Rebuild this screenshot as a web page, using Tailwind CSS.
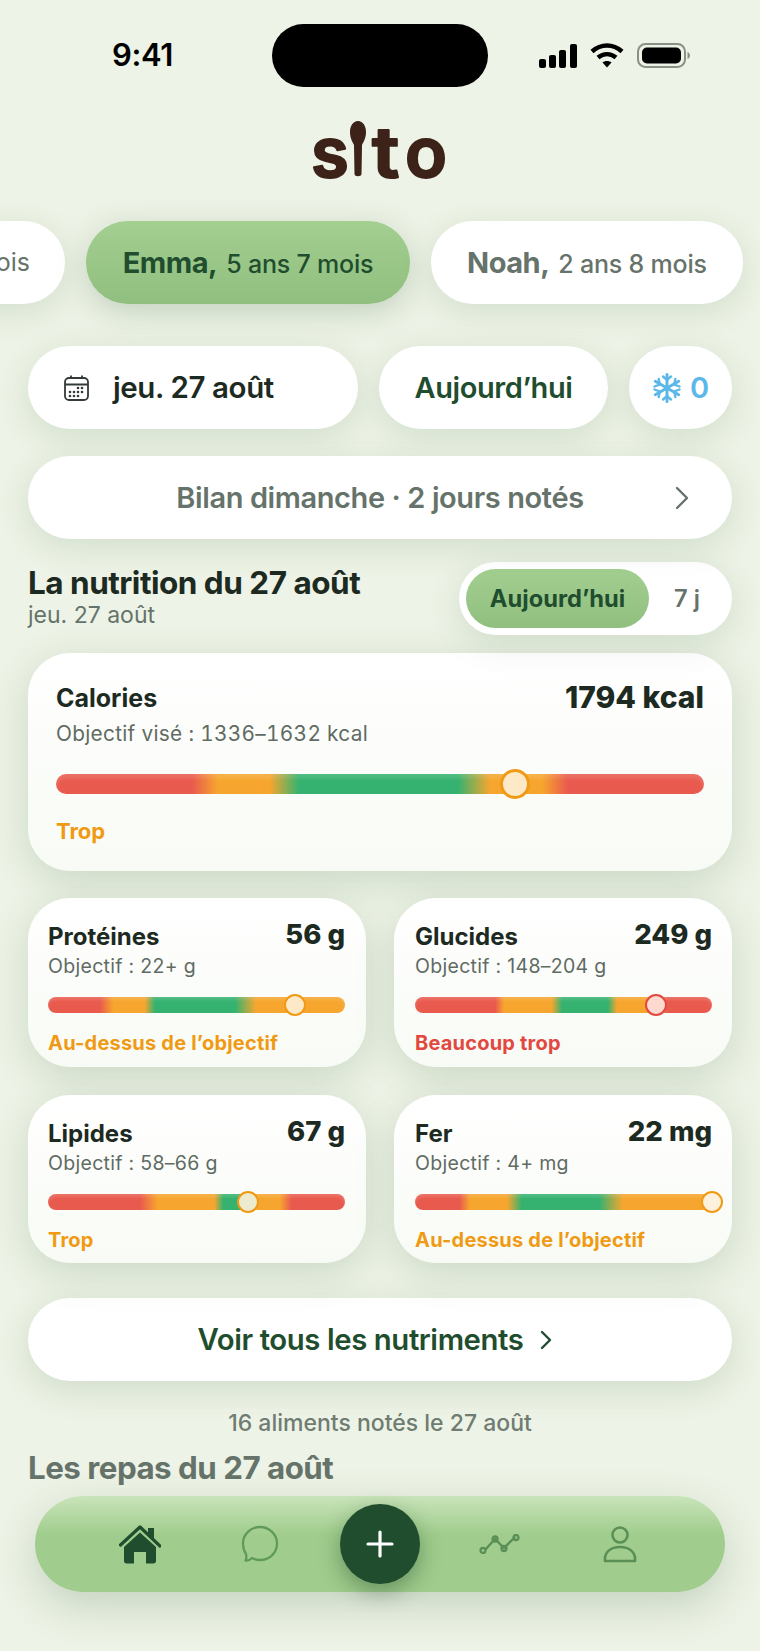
<!DOCTYPE html>
<html lang="fr">
<head>
    <meta charset="UTF-8">
    <meta name="viewport" content="width=device-width, initial-scale=1.0">
    <title>Sito</title>
    <script src="https://cdn.jsdelivr.net/npm/@tailwindcss/browser@4"></script>
</head>
<body>
    <div class="relative w-[760px] h-[1651px] overflow-hidden bg-[#edf3e6] font-[Inter,sans-serif] text-[#1d2a22]">
        <!-- Status bar -->
        <div class="flex items-center justify-between h-[63px] mt-[24px] pl-[112px] pr-[70px]">
            <span class="w-[120px] text-[31px] font-semibold text-black tracking-[-0.4px]">9:41</span>
            <div class="w-[216px] h-[63px] -ml-[11px] rounded-full bg-black"></div>
            <div class="flex items-center gap-[13px]">
                <svg width="38" height="24" viewBox="0 0 38 24" fill="#000"><rect x="0" y="15" width="7" height="9" rx="2"/><rect x="10" y="11" width="7" height="13" rx="2"/><rect x="20" y="6" width="7" height="18" rx="2"/><rect x="31" y="0" width="7" height="24" rx="2"/></svg>
                <svg width="34" height="25" viewBox="0 0 34 25" fill="none" stroke="#000" stroke-width="4.5"><path d="M2 8.5C11 0.5 23 0.5 32 8.5"/><path d="M8 14.5C13.500 10 20.500 10 26 14.500"/><path d="M12.500 19.500L17 24.500L21.500 19.500C19 17.500 15 17.500 12.500 19.500Z" fill="#000" stroke="none"/></svg>
                <svg width="53" height="25" viewBox="0 0 53 25" fill="none"><rect x="1" y="1" width="47" height="23" rx="7.500" stroke="#8b8f86" stroke-width="2"/><rect x="5" y="4.500" width="39" height="16" rx="5" fill="#000"/><path d="M50.500 9C52 9.500 53 11 53 12.500C53 14 52 15.500 50.500 16Z" fill="#8b8f86"/></svg>
            </div>
        </div>

        <!-- Logo -->
        <div class="flex justify-center mt-[20px] -mb-[16px]">
            <svg width="136" height="88" viewBox="0 0 136 88" fill="#3c2218" stroke="#3c2218" stroke-width="2" stroke-linejoin="round" font-family="Inter, sans-serif" font-weight="600">
                <text x="-1" y="70" font-size="69">s</text>
                <path transform="translate(1 14)" d="M45 0C50 0 53 5 53 11C53 17 50.500 21 49 24L48.500 53C48.500 56 41.500 56 41.500 53L41 24C39.500 21 37 17 37 11C37 5 40 0 45 0Z" stroke="none"/>
                <text transform="translate(60 70) scale(1.12 1)" font-size="69">t</text>
                <text x="93" y="70" font-size="69">o</text>
            </svg>
        </div>

        <!-- Profiles -->
        <div class="flex gap-[21px] mt-[42px] -ml-[135px]">
            <div class="flex items-center justify-end shrink-0 w-[200px] h-[83px] pr-[35px] rounded-full bg-white text-[25px] text-[#66736a] shadow-[0_8px_30px_rgba(70,110,70,0.15)]">mois</div>
            <div class="flex items-center justify-center shrink-0 w-[324px] h-[83px] rounded-full bg-linear-to-b from-[#a3cf91] to-[#90bf7f] text-[#1f4d2e] shadow-[0_8px_30px_rgba(70,110,70,0.25)]">
                <div class="flex items-baseline gap-[9px]">
                    <span class="text-[29px] font-bold tracking-[-0.5px]">Emma,</span><span class="text-[25px] font-medium tracking-[-0.2px]">5 ans 7 mois</span>
                </div>
            </div>
            <div class="flex items-center justify-center shrink-0 w-[312px] h-[83px] rounded-full bg-white text-[#66736a] shadow-[0_8px_30px_rgba(70,110,70,0.15)]">
                <div class="flex items-baseline gap-[9px]">
                    <span class="text-[29px] font-bold tracking-[-0.5px]">Noah,</span><span class="text-[25px] font-medium tracking-[-0.2px]">2 ans 8 mois</span>
                </div>
            </div>
        </div>

        <div class="px-[28px]">
            <!-- Date row -->
            <div class="flex gap-[21px] mt-[42px]">
                <div class="flex items-center gap-[24px] w-[330px] h-[83px] pl-[36px] rounded-full bg-white shadow-[0_8px_32px_rgba(70,110,70,0.16)]">
                    <svg width="25" height="26" viewBox="0 0 25 26" fill="none" stroke="#333b36" stroke-width="1.800"><rect x="1" y="3" width="23" height="22" rx="4"/><path d="M1 9.500H24M7 0.500V4M18 0.500V4" /><g fill="#333b36" stroke="none"><circle cx="14" cy="13" r="1.300"/><circle cx="18" cy="13" r="1.300"/><circle cx="6" cy="17" r="1.300"/><circle cx="10" cy="17" r="1.300"/><circle cx="14" cy="17" r="1.300"/><circle cx="18" cy="17" r="1.300"/><circle cx="6" cy="21" r="1.300"/><circle cx="10" cy="21" r="1.300"/><circle cx="14" cy="21" r="1.300"/></g></svg>
                    <span class="text-[29.500px] font-semibold tracking-[-0.4px]">jeu. 27 août</span>
                </div>
                <div class="flex items-center justify-center w-[229px] h-[83px] rounded-full bg-white text-[29px] font-semibold tracking-[-0.4px] text-[#1f4d2e] shadow-[0_8px_32px_rgba(70,110,70,0.16)]">Aujourd’hui</div>
                <div class="flex items-center justify-center gap-[8px] w-[103px] h-[83px] rounded-full bg-white text-[29px] font-semibold text-[#5bb8e8] shadow-[0_8px_32px_rgba(70,110,70,0.16)]">
                    <svg width="30" height="30" viewBox="0 0 30 30" fill="none" stroke="#5bb8e8" stroke-width="3" stroke-linecap="round"><path d="M15 1.500V28.500M3.300 8.250L26.700 21.750M26.700 8.250L3.300 21.750"/><path d="M11 3.500L15 7L19 3.500M11 26.500L15 23L19 26.500M2.500 13.500L7.700 11.500L6.700 6M27.500 13.500L22.300 11.500L23.300 6M2.500 16.500L7.700 18.500L6.700 24M27.500 16.500L22.300 18.500L23.300 24" stroke-width="2.400"/></svg>
                    <span>0</span>
                </div>
            </div>

            <!-- Bilan -->
            <div class="relative flex items-center justify-center h-[83px] mt-[27px] rounded-full bg-white text-[29px] font-semibold tracking-[-0.4px] text-[#66736a] shadow-[0_8px_32px_rgba(70,110,70,0.16)]">
                Bilan dimanche · 2 jours notés
                <svg class="absolute right-[43px] top-[30px]" width="14" height="24" viewBox="0 0 14 24" fill="none" stroke="#66736a" stroke-width="2.400" stroke-linecap="round" stroke-linejoin="round"><path d="M2 2L12 12L2 22"/></svg>
            </div>

            <!-- Nutrition header -->
            <div class="flex justify-between mt-[23px]">
                <div class="pt-[3px]">
                    <h1 class="text-[31.500px] leading-[36px] font-bold tracking-[-0.5px] text-[#1d2a22]">La nutrition du 27 août</h1>
                    <p class="mt-[1px] text-[23px] leading-[26px] text-[#66736a]">jeu. 27 août</p>
                </div>
                <div class="flex items-center w-[273px] h-[73px] p-[7px] rounded-full bg-white shadow-[0_8px_32px_rgba(70,110,70,0.16)]">
                    <div class="flex items-center justify-center w-[183px] h-[59px] rounded-full bg-linear-to-b from-[#a3cf91] to-[#90bf7f] text-[23.700px] font-bold text-[#1f4d2e]">Aujourd’hui</div>
                    <div class="flex-1 text-center text-[23.700px] font-semibold text-[#66736a]">7 j</div>
                </div>
            </div>

            <!-- Calories -->
            <div class="h-[218px] mt-[18px] px-[28px] pt-[31px] rounded-[42px] bg-linear-to-b from-white to-[#f8fbf5] shadow-[0_10px_38px_rgba(70,110,70,0.2)]">
                <div class="flex items-center justify-between h-[30px]">
                    <span class="text-[25px] font-bold">Calories</span>
                    <span class="-mt-[3px] text-[30px] font-extrabold">1794 kcal</span>
                </div>
                <p class="mt-[7px] text-[20.800px] leading-[26px] tracking-[0.3px] tabular-nums text-[#5f6b63]">Objectif visé : 1336–1632 kcal</p>
                <div class="relative h-[20px] mt-[27px] rounded-full bg-[linear-gradient(90deg,#e95a4e_21%,#f6a62e_25%,#f6a62e_33%,#35b26f_37.500%,#35b26f_62%,#f6a62e_67%,#f6a62e_75%,#e95a4e_79%)] shadow-[inset_0_4px_4px_rgba(255,255,255,0.14)]">
                    <div class="absolute left-[70.800%] top-[-5px] w-[30px] h-[30px] -ml-[15px] rounded-full border-[3px] border-[#f09a14] bg-[#fde8c8]"></div>
                </div>
                <p class="mt-[24px] text-[22px] leading-[26px] font-bold text-[#f09a14]">Trop</p>
            </div>

            <!-- Nutrient cards -->
            <div class="grid grid-cols-2 gap-x-[28px] gap-y-[28px] mt-[27px]">
                <div class="h-[169px] pl-[20px] pr-[21px] pt-[26px] rounded-[42px] bg-linear-to-b from-white to-[#f8fbf5] shadow-[0_10px_38px_rgba(70,110,70,0.2)]">
                    <div class="flex items-center justify-between h-[26px]">
                        <span class="text-[24px] font-bold">Protéines</span>
                        <span class="-mt-[4px] text-[27.500px] font-extrabold">56 g</span>
                    </div>
                    <p class="mt-[4px] text-[19.500px] leading-[24px] tracking-[0.3px] text-[#5f6b63]">Objectif : 22+ g</p>
                    <div class="relative h-[16px] mt-[19px] rounded-full bg-[linear-gradient(90deg,#e95a4e_17.500%,#f6a62e_22%,#f6a62e_32.600%,#35b26f_36%,#35b26f_63%,#f6a62e_70%)] shadow-[inset_0_3px_3px_rgba(255,255,255,0.14)]">
                        <div class="absolute left-[83%] top-[-3px] w-[22px] h-[22px] -ml-[11px] rounded-full border-[2.500px] border-[#f09a14] bg-[#fde8c8]"></div>
                    </div>
                    <p class="mt-[18px] text-[20px] leading-[24px] font-bold tracking-[0.2px] text-[#f09a14]">Au-dessus de l’objectif</p>
                </div>

                <div class="h-[169px] pl-[21px] pr-[20px] pt-[26px] rounded-[42px] bg-linear-to-b from-white to-[#f8fbf5] shadow-[0_10px_38px_rgba(70,110,70,0.2)]">
                    <div class="flex items-center justify-between h-[26px]">
                        <span class="text-[24px] font-bold">Glucides</span>
                        <span class="-mt-[4px] text-[27.500px] font-extrabold">249 g</span>
                    </div>
                    <p class="mt-[4px] text-[19.500px] leading-[24px] tracking-[0.3px] text-[#5f6b63]">Objectif : 148–204 g</p>
                    <div class="relative h-[16px] mt-[19px] rounded-full bg-[linear-gradient(90deg,#e95a4e_27%,#f6a62e_30%,#f6a62e_46%,#35b26f_49.500%,#35b26f_65%,#f6a62e_68%,#f6a62e_82%,#e95a4e_85%)] shadow-[inset_0_3px_3px_rgba(255,255,255,0.14)]">
                        <div class="absolute left-[81%] top-[-3px] w-[22px] h-[22px] -ml-[11px] rounded-full border-[2.500px] border-[#e2483f] bg-[#fdd9d0]"></div>
                    </div>
                    <p class="mt-[18px] text-[20px] leading-[24px] font-bold tracking-[0.2px] text-[#e2483f]">Beaucoup trop</p>
                </div>

                <div class="h-[168px] pl-[20px] pr-[21px] pt-[26px] rounded-[42px] bg-linear-to-b from-white to-[#f8fbf5] shadow-[0_10px_38px_rgba(70,110,70,0.2)]">
                    <div class="flex items-center justify-between h-[26px]">
                        <span class="text-[24px] font-bold">Lipides</span>
                        <span class="-mt-[4px] text-[27.500px] font-extrabold">67 g</span>
                    </div>
                    <p class="mt-[4px] text-[19.500px] leading-[24px] tracking-[0.3px] text-[#5f6b63]">Objectif : 58–66 g</p>
                    <div class="relative h-[16px] mt-[19px] rounded-full bg-[linear-gradient(90deg,#e95a4e_31%,#f6a62e_37%,#f6a62e_56%,#35b26f_59%,#35b26f_66%,#f6a62e_69%,#f6a62e_78%,#e95a4e_82%)] shadow-[inset_0_3px_3px_rgba(255,255,255,0.14)]">
                        <div class="absolute left-[67.500%] top-[-3px] w-[22px] h-[22px] -ml-[11px] rounded-full border-[2.500px] border-[#f09a14] bg-[#ecebcf]"></div>
                    </div>
                    <p class="mt-[18px] text-[20px] leading-[24px] font-bold tracking-[0.2px] text-[#f09a14]">Trop</p>
                </div>

                <div class="h-[168px] pl-[21px] pr-[20px] pt-[26px] rounded-[42px] bg-linear-to-b from-white to-[#f8fbf5] shadow-[0_10px_38px_rgba(70,110,70,0.2)]">
                    <div class="flex items-center justify-between h-[26px]">
                        <span class="text-[24px] font-bold">Fer</span>
                        <span class="-mt-[4px] text-[27.500px] font-extrabold">22 mg</span>
                    </div>
                    <p class="mt-[4px] text-[19.500px] leading-[24px] tracking-[0.3px] text-[#5f6b63]">Objectif : 4+ mg</p>
                    <div class="relative h-[16px] mt-[19px] rounded-full bg-[linear-gradient(90deg,#e95a4e_15%,#f6a62e_18.500%,#f6a62e_31%,#35b26f_36%,#35b26f_62%,#f6a62e_70%)] shadow-[inset_0_3px_3px_rgba(255,255,255,0.14)]">
                        <div class="absolute left-full top-[-3px] w-[22px] h-[22px] -ml-[11px] rounded-full border-[2.500px] border-[#f09a14] bg-[#fdf0dc]"></div>
                    </div>
                    <p class="mt-[18px] text-[20px] leading-[24px] font-bold tracking-[0.2px] text-[#f09a14]">Au-dessus de l’objectif</p>
                </div>
            </div>

            <!-- All nutrients -->
            <div class="flex items-center justify-center gap-[17px] h-[83px] mt-[35px] pr-[10px] rounded-full bg-white text-[29.300px] font-semibold tracking-[-0.4px] text-[#1f4d2e] shadow-[0_8px_32px_rgba(70,110,70,0.18)]">
                <span>Voir tous les nutriments</span>
                <svg width="12" height="20" viewBox="0 0 12 20" fill="none" stroke="#1f4d2e" stroke-width="2.400" stroke-linecap="round" stroke-linejoin="round"><path d="M2 2L10 10L2 18"/></svg>
            </div>

            <p class="mt-[28px] text-center text-[23px] leading-[28px] font-medium text-[#6f7c72]">16 aliments notés le 27 août</p>
            <h2 class="mt-[14px] text-[31.300px] leading-[34px] font-bold tracking-[-0.5px] text-[#66736a]">Les repas du 27 août</h2>
        </div>

        <!-- Bottom navigation -->
        <nav class="absolute left-[35px] top-[1496px] flex justify-center items-center w-[690px] h-[96px] rounded-full bg-[linear-gradient(180deg,#c9e4ba_0%,#a0cd8d_40%,#a0cd8d_100%)] shadow-[0_14px_40px_rgba(70,110,70,0.24)]">
            <div class="flex justify-center w-[120px]">
                <svg width="42" height="39" viewBox="0 0 42 39" fill="#1f4d2e"><path d="M1.500 20L21 2L41 21" fill="none" stroke="#1f4d2e" stroke-width="3.200" stroke-linecap="round" stroke-linejoin="round"/><path d="M29 3H35V14L29 9Z"/><path d="M21 7.500L37 22V36C37 37.500 36 38.500 34.500 38.500H27V27H15V38.500H7.500C6 38.500 5 37.500 5 36V22Z"/></svg>
            </div>
            <div class="flex justify-center w-[120px]">
                <svg width="38" height="38" viewBox="0 0 38 38" fill="none" stroke="#5f9a5b" stroke-width="2.300" stroke-linejoin="round"><path d="M19 2C28.500 2 36 9.500 36 18.500C36 28 28.500 35 19 35C16 35 13.500 34.500 11 33C9 35 6.500 36 4.500 35.500C5.500 33.500 5.500 31 5 29C3 26 2 22.500 2 18.500C2 9.500 9.500 2 19 2Z"/></svg>
            </div>
            <div class="flex items-center justify-center w-[80px] h-[80px] mx-[20px] rounded-full bg-[#1f4d2e] shadow-[0_8px_22px_rgba(20,60,30,0.4)]">
                <svg width="28" height="28" viewBox="0 0 28 28" fill="none" stroke="#fff" stroke-width="3.200" stroke-linecap="round"><path d="M14 2V26M2 14H26"/></svg>
            </div>
            <div class="flex justify-center w-[120px]">
                <svg width="42" height="20" viewBox="0 0 42 20" fill="none" stroke="#5a8f56" stroke-width="2.300"><path d="M6 16L16 5L25 14L36 3"/><circle cx="4" cy="16.500" r="2.500"/><circle cx="16" cy="5" r="2.500"/><circle cx="25" cy="14.500" r="2.500"/><circle cx="37" cy="3.500" r="2.500"/></svg>
            </div>
            <div class="flex justify-center w-[120px]">
                <svg width="34" height="37" viewBox="0 0 34 37" fill="none" stroke="#5a8f56" stroke-width="2.600" stroke-linejoin="round"><circle cx="17" cy="9" r="7.500"/><path d="M2 35C1 26 8 21 17 21C26 21 33 26 32 35Z"/></svg>
            </div>
        </nav>
    </div>
</body>
</html>
